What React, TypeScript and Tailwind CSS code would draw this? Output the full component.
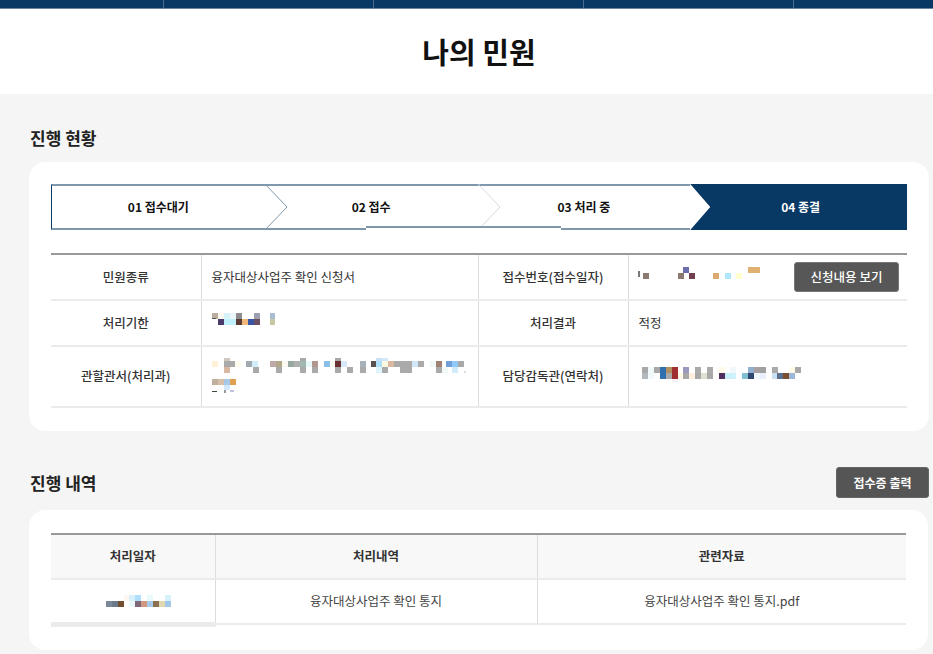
import React from 'react';

type Cell = [number, number, number, number, string];

// 모자이크 처리된 개인정보 영역 (픽셀 블록 그림)
function Mosaic({ w, h, cells }: { w: number; h: number; cells: Cell[] }) {
  return (
    <svg width={w} height={h} viewBox={`0 0 ${w} ${h}`} className="block shrink-0">
      {cells.map(([x, y, cw, ch, c], i) => (
        <rect key={i} x={x} y={y} width={cw} height={ch} fill={c} />
      ))}
    </svg>
  );
}

const row = (y: number, h: number, items: [number, string][], w = 6): Cell[] =>
  items.map(([x, c]) => [x, y, w, h, c]);

const receiptNo: Cell[] = [
  [0, 4, 2, 6, '#777'],
  ...row(6, 6, [[5, '#8a7a70'], [40, '#8a7a72'], [51, '#704050'], [75, '#dcaa70'], [87, '#aee6fb'], [98, '#ffffcf']]),
  ...row(0, 6, [[45, '#6b6fb0']]),
  [110, 0, 12, 6, '#e0b070'],
];

const deadline: Cell[] = [
  ...row(0, 6, [[0, '#bbaea0'], [6, '#fafaf0'], [12, '#d8f2fa'], [18, '#eaf6fa'], [24, '#8c8c8c'], [42, '#9ca0b0']]),
  ...row(6, 6, [[6, '#4b3b6b'], [12, '#c0f0fc'], [18, '#c0f0fc'], [24, '#5b3a33'], [30, '#f0b878'], [36, '#3655a2'], [42, '#6c5062']]),
  [0, 5, 4, 1, '#555'],
  [58, 0, 5, 6, '#a8bed0'],
  [58, 6, 5, 6, '#c8c8a4'],
];

const office: Cell[] = [
  ...row(0, 3, [[12, '#d0c8c0'], [88, '#a8a8a8'], [123, '#a8a8a8'], [164, '#c8e0f8'], [170, '#d0e8fa']]),
  ...row(3, 6, [
    [0, '#fff0d8'], [12, '#aaaaaa'], [18, '#aaaaaa'], [23, '#fffaf0'], [34, '#a0a8b0'], [40, '#d0eefa'],
    [58, '#c0aaa8'], [64, '#b0a888'], [70, '#fafaf0'], [76, '#98a8a0'], [82, '#b0b0b0'], [88, '#a0b8b0'],
    [94, '#e8f8f8'], [100, '#b09890'], [112, '#88c0e8'], [118, '#fafaf0'], [123, '#6a3030'], [129, '#d8e8fa'],
    [148, '#a8b0b8'], [159, '#5a5050'], [164, '#aee0fa'], [170, '#fff8e0'], [176, '#d8b8a0'], [182, '#aaaaaa'],
    [188, '#aaaaaa'], [194, '#aaaaaa'], [200, '#d0e8fa'], [206, '#aaaaaa'], [218, '#f0f8f8'], [224, '#a08070'],
    [234, '#70a0d8'], [240, '#90c8f8'], [246, '#a8a8a8'],
  ]),
  ...row(9, 6, [
    [12, '#d8b8a0'], [41, '#aaaaaa'], [64, '#aaaaaa'], [88, '#aaaaaa'], [100, '#aaaaaa'], [123, '#aaaaaa'],
    [135, '#aaaaaa'], [148, '#aaaaaa'], [164, '#e0f4fc'], [170, '#aaaaaa'], [188, '#aaaaaa'], [194, '#aaaaaa'],
    [224, '#aaaaaa'], [230, '#f0f8f8'], [240, '#d0ecfa'],
  ]),
  [252, 13, 2, 2, '#dddddd'],
  ...row(21, 6, [[0, '#c0b0a0'], [6, '#d8c0a8'], [12, '#a8c8e8'], [18, '#e0a050']]),
  [12, 27, 6, 5, '#d0e8fa'],
  [0, 33, 5, 1, '#444'],
  [12, 32, 2, 3, '#999'],
  [18, 32, 4, 2, '#c8c0e0'],
];

const inspector: Cell[] = [
  ...row(0, 6, [
    [0, '#a8a8a8'], [6, '#f0fafa'], [12, '#a8a8a8'], [18, '#3070b0'], [24, '#b09060'], [30, '#a03030'],
    [41, '#9a9ac0'], [53, '#aaaaaa'], [65, '#aaaaaa'], [77, '#fffbe8'], [88, '#f0f8fc'], [106, '#90b0d0'],
    [112, '#a8a0a0'], [118, '#a0a0a0'], [130, '#aaaaaa'], [147, '#fffbe8'], [153, '#a8a8a8'],
  ]),
  ...row(6, 6, [
    [0, '#b0b8c0'], [6, '#f0fafa'], [18, '#3070b0'], [24, '#a8a8a8'], [30, '#a03030'], [36, '#fff8e8'],
    [41, '#a8a8a8'], [47, '#fff0e0'], [53, '#a8a8a8'], [59, '#e0e0d0'], [65, '#a8a8a8'], [77, '#503060'],
    [83, '#c8f0fb'], [88, '#d0f0fb'], [100, '#80c0d0'], [106, '#304870'], [112, '#f0f8fc'], [118, '#e8f0fb'],
    [130, '#c8e0f0'], [135, '#5a7090'], [141, '#7a5030'], [147, '#a0b8d8'],
  ]),
  [30, 12, 6, 3, '#f8f0f8'],
];

const procDate: Cell[] = [
  ...row(0, 6, [[18, '#fff8f0'], [23, '#d8f0fb'], [29, '#aee0fb'], [41, '#e8fafa'], [59, '#d8f0fb']]),
  ...row(6, 6, [
    [0, '#7a8898'], [6, '#6a7a88'], [12, '#705030'], [23, '#e8f8fb'], [29, '#806878'], [35, '#d09880'],
    [41, '#a8c8e8'], [47, '#8a7050'], [53, '#e0d8b0'], [59, '#a0c8e8'],
  ]),
];

function Chevron({ color }: { color: string }) {
  return (
    <svg className="absolute left-0 top-[-2px] h-[46px] w-[24px]" viewBox="0 0 24 46">
      <polyline points="0,0 22,23 0,46" fill="none" stroke={color} strokeWidth="1" />
    </svg>
  );
}

export default function App() {
  return (
    <div className="min-h-screen bg-[#f5f5f5] font-['Noto_Sans_CJK_KR','Noto_Sans',sans-serif] text-[#333]">
      {/* 상단 메뉴 바 */}
      <div className="flex h-[9px] border-b border-[#6a86a0] bg-[#083864]">
        <div className="w-[164px] border-r border-[#4a6b8a]" />
        <div className="w-[210px] border-r border-[#4a6b8a]" />
        <div className="w-[210px] border-r border-[#4a6b8a]" />
        <div className="w-[210px] border-r border-[#4a6b8a]" />
        <div className="flex-1" />
      </div>

      {/* 페이지 타이틀 */}
      <div className="bg-white">
        <div className="ml-[29px] flex h-[85px] w-[900px] items-center justify-center">
          <h1 className="text-[29px] font-bold text-[#111]">나의 민원</h1>
        </div>
      </div>

      <div className="ml-[29px] w-[900px] pb-[6px]">
        {/* 진행 현황 */}
        <h2 className="pt-[31px] pb-[12px] pl-px text-[17px] font-bold leading-[25px] text-[#222]">진행 현황</h2>
        <div className="rounded-[16px] bg-white px-[22px] pt-[22px] pb-[23px]">
          <div className="relative flex h-[46px] text-[12px] font-bold text-[#111]">
            <div className="flex flex-1 items-center justify-center border-y-2 border-l border-[#7f98ad] border-l-[#083864]">
              01 접수대기
            </div>
            <div className="relative flex flex-1 items-center justify-center border-y-2 border-[#7f98ad]">
              <Chevron color="#7f98ad" />
              02 접수
            </div>
            <div className="relative flex flex-1 items-center justify-center border-y-2 border-[#7f98ad]">
              <Chevron color="#d3dbe2" />
              03 처리 중
            </div>
            <div className="flex flex-1 items-center justify-center bg-[#083864] pl-[4px] text-white [clip-path:polygon(0_0,100%_0,100%_100%,0_100%,20px_50%)]">
              04 종결
            </div>
            <div className="absolute bottom-0 left-[315px] h-[2px] w-[195px] bg-white" />
            <div className="absolute bottom-[2px] left-[315px] h-[2px] w-[195px] bg-[#7f98ad]" />
          </div>

          <table className="mt-[23px] w-full table-fixed border-collapse border-t-2 border-[#999] text-[12.5px]">
            <colgroup>
              <col className="w-[150px]" />
              <col className="w-[277px]" />
              <col className="w-[150px]" />
              <col />
            </colgroup>
            <tbody>
              <tr className="h-[46px] border-b-2 border-[#ebebeb]">
                <th className="text-center font-medium">민원종류</th>
                <td className="border-l border-[#dcdcdc] pl-[10px] text-[#333]">융자대상사업주 확인 신청서</td>
                <th className="border-l border-[#dcdcdc] text-center font-medium">접수번호(접수일자)</th>
                <td className="border-l border-[#dcdcdc] pr-[8px] pl-[9px]">
                  <div className="flex items-center justify-between">
                    <div className="mb-[8px]">
                      <Mosaic w={124} h={12} cells={receiptNo} />
                    </div>
                    <button className="h-[30px] w-[105px] rounded-[3px] border border-[#777] bg-[#575757] text-[12.5px] font-medium text-white">
                      신청내용 보기
                    </button>
                  </div>
                </td>
              </tr>
              <tr className="h-[46px] border-b-2 border-[#ebebeb]">
                <th className="text-center font-medium">처리기한</th>
                <td className="border-l border-[#dcdcdc] pl-[10px]">
                  <div className="mb-[8px]">
                    <Mosaic w={64} h={12} cells={deadline} />
                  </div>
                </td>
                <th className="border-l border-[#dcdcdc] text-center font-medium">처리결과</th>
                <td className="border-l border-[#dcdcdc] pl-[10px]">적정</td>
              </tr>
              <tr className="h-[61px] border-b-2 border-[#ebebeb]">
                <th className="text-center font-medium">관할관서(처리과)</th>
                <td className="border-l border-[#dcdcdc] pl-[10px]">
                  <Mosaic w={256} h={37} cells={office} />
                </td>
                <th className="border-l border-[#dcdcdc] text-center font-medium">담당감독관(연락처)</th>
                <td className="border-l border-[#dcdcdc] pl-[13px]">
                  <div className="mb-[4px]">
                    <Mosaic w={160} h={16} cells={inspector} />
                  </div>
                </td>
              </tr>
            </tbody>
          </table>
        </div>

        {/* 진행 내역 */}
        <div className="mt-[36px] mb-[12px] flex items-center justify-between">
          <h2 className="pl-px text-[17px] font-bold leading-[25px] text-[#222]">진행 내역</h2>
          <button className="h-[31px] w-[93px] rounded-[3px] border border-[#666] bg-[#555] text-[12px] font-bold text-white">
            접수증 출력
          </button>
        </div>
        <div className="w-[899px] rounded-[16px] bg-white px-[22px] pt-[23px] pb-[23px]">
          <table className="w-full table-fixed border-collapse border-t-2 border-[#999] text-[12.5px]">
            <colgroup>
              <col className="w-[164px]" />
              <col className="w-[322px]" />
              <col />
            </colgroup>
            <thead>
              <tr className="h-[45px] border-b-2 border-[#ebebeb] bg-[#f8f8f8]">
                <th className="text-center font-bold">처리일자</th>
                <th className="border-l border-[#dcdcdc] text-center font-bold">처리내역</th>
                <th className="border-l border-[#dcdcdc] text-center font-bold">관련자료</th>
              </tr>
            </thead>
            <tbody>
              <tr className="h-[45px]">
                <td className="border-b-[5px] border-[#ebebeb]">
                  <div className="flex justify-center pl-[11px]">
                    <Mosaic w={65} h={12} cells={procDate} />
                  </div>
                </td>
                <td className="border-b-2 border-l border-[#ebebeb] border-l-[#dcdcdc] text-center text-[#444]">
                  융자대상사업주 확인 통지
                </td>
                <td className="border-b-2 border-l border-[#ebebeb] border-l-[#dcdcdc] text-center text-[#444]">
                  융자대상사업주 확인 통지.pdf
                </td>
              </tr>
            </tbody>
          </table>
        </div>
      </div>
    </div>
  );
}
